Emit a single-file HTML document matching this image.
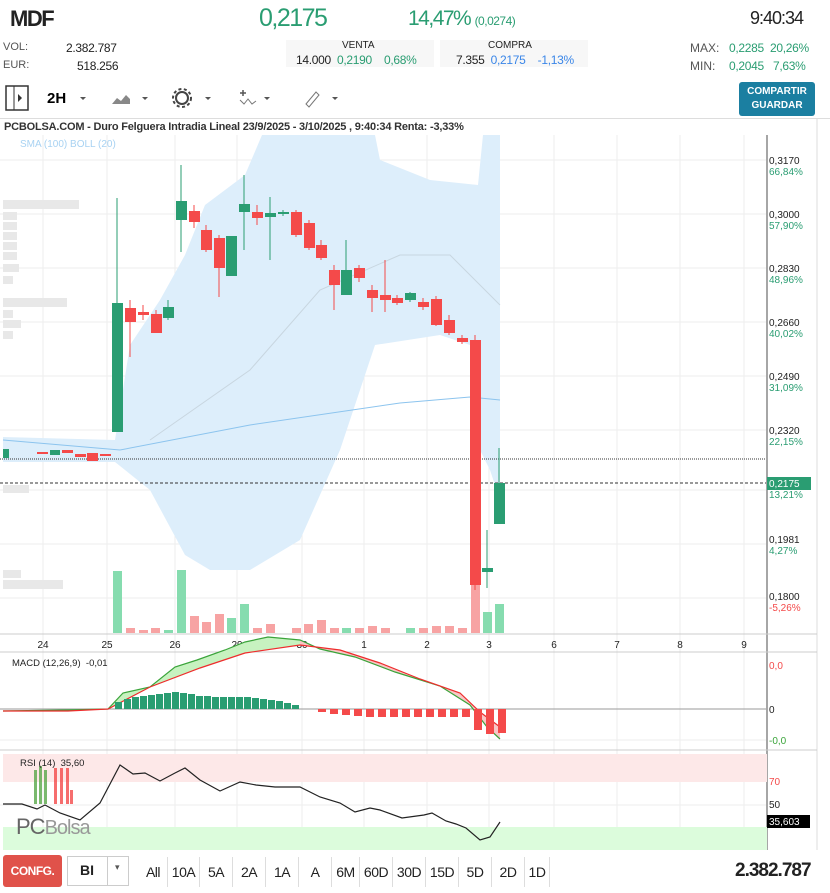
<!DOCTYPE html>
<html><head><meta charset="utf-8"><style>
body{margin:0;width:830px;height:893px;background:#fff;font-family:"Liberation Sans",sans-serif;position:relative;overflow:hidden;color:#222}
.a{position:absolute;white-space:nowrap}
.g{color:#2a9d72}.b{color:#3a86e8}
.s{font-size:11px;color:#555}
.bt{position:absolute;top:857px;height:30px;line-height:30px;font-size:14px;text-align:center;border-right:1px solid #ddd;letter-spacing:-0.5px}
</style></head><body>
<div class="a" style="left:10px;top:6px;font-size:22px;font-weight:bold;letter-spacing:-1.5px">MDF</div>
<div class="a g" style="left:259px;top:4px;font-size:25px;letter-spacing:-1.5px">0,2175</div>
<div class="a g" style="left:408px;top:7px;font-size:21px;letter-spacing:-1.5px">14,47% <span style="font-size:12px;letter-spacing:-0.5px">(0,0274)</span></div>
<div class="a" style="left:750px;top:8px;font-size:18px;letter-spacing:-1px">9:40:34</div>
<div class="a s" style="left:3px;top:41px">VOL:</div><div class="a s" style="left:3px;top:59px">EUR:</div>
<div class="a" style="left:66px;top:41px;font-size:12px;letter-spacing:-0.3px">2.382.787</div>
<div class="a" style="left:77px;top:59px;font-size:12px;letter-spacing:-0.3px">518.256</div>
<div class="a" style="left:286px;top:40px;width:148px;height:27px;background:#f7f7f7"></div>
<div class="a" style="left:440px;top:40px;width:148px;height:27px;background:#f7f7f7"></div>
<div class="a" style="left:342px;top:40px;font-size:10px">VENTA</div>
<div class="a" style="left:488px;top:40px;font-size:10px">COMPRA</div>
<div class="a" style="left:296px;top:53px;font-size:12px;letter-spacing:-0.3px">14.000 <span class="g">&nbsp;0,2190&nbsp;&nbsp;&nbsp; 0,68%</span></div>
<div class="a" style="left:456px;top:53px;font-size:12px;letter-spacing:-0.3px">7.355 <span class="b">&nbsp;0,2175&nbsp;&nbsp;&nbsp; -1,13%</span></div>
<div class="a s" style="left:690px;top:41px;font-size:12px">MAX:</div><div class="a s" style="left:690px;top:59px;font-size:12px">MIN:</div>
<div class="a g" style="left:729px;top:41px;font-size:12px;letter-spacing:-0.3px">0,2285 &nbsp;20,26%</div>
<div class="a g" style="left:729px;top:59px;font-size:12px;letter-spacing:-0.3px">0,2045 &nbsp;&nbsp;7,63%</div>
<!-- toolbar -->
<svg class="a" style="left:0;top:82px" width="360" height="32">
<rect x="6" y="4" width="22" height="24" fill="none" stroke="#333" stroke-width="1.5"/><line x1="14" y1="4" x2="14" y2="28" stroke="#333"/><path d="M18 12l4 4-4 4z" fill="#333"/>
<text x="47" y="21" font-size="15" font-weight="bold" font-family="Liberation Sans">2H</text>
<path d="M80 15h6l-3 3z M142 15h6l-3 3z M205 15h6l-3 3z M264 15h6l-3 3z M332 15h6l-3 3z" fill="#555"/>
<path d="M112 22l5-6 4 3 5-6 4 4v5z" fill="#888"/>
<circle cx="182" cy="16" r="6" fill="none" stroke="#444" stroke-width="2"/><circle cx="182" cy="16" r="9" fill="none" stroke="#444" stroke-width="2" stroke-dasharray="3 2.5"/>
<path d="M240 18l4 4 4-5 4 5 4-3" fill="none" stroke="#777"/><path d="M243 8v6M240 11h6" stroke="#555" stroke-width="1.5"/>
<path d="M306 22l10-12 3 3-10 12z" fill="none" stroke="#777"/>
</svg>
<div class="a" style="left:739px;top:82px;width:76px;height:34px;background:#1b7fa1;border-radius:3px;color:#fff;font-size:10px;font-weight:bold;text-align:center;line-height:14px;padding-top:3px;box-sizing:border-box">COMPARTIR<br>GUARDAR</div>
<div class="a" style="left:0;top:118px;width:830px;border-top:1px solid #ddd"></div>
<div class="a" style="left:4px;top:121px;font-size:11px;font-weight:bold;color:#333;letter-spacing:-0.2px">PCBOLSA.COM - Duro Felguera Intradia Lineal 23/9/2025 - 3/10/2025 , 9:40:34 Renta: -3,33%</div>
<svg class="a" style="left:0;top:0" width="830" height="893" font-family="Liberation Sans">
<g stroke="#eee" stroke-width="1">
<line x1="43" y1="135" x2="43" y2="850"/><line x1="107" y1="135" x2="107" y2="850"/><line x1="175" y1="135" x2="175" y2="850"/><line x1="237" y1="135" x2="237" y2="850"/><line x1="302" y1="135" x2="302" y2="850"/><line x1="364" y1="135" x2="364" y2="850"/><line x1="427" y1="135" x2="427" y2="850"/><line x1="489" y1="135" x2="489" y2="850"/><line x1="554" y1="135" x2="554" y2="850"/><line x1="617" y1="135" x2="617" y2="850"/><line x1="680" y1="135" x2="680" y2="850"/><line x1="744" y1="135" x2="744" y2="850"/>
<line x1="0" y1="160" x2="766" y2="160"/><line x1="0" y1="214" x2="766" y2="214"/><line x1="0" y1="268" x2="766" y2="268"/><line x1="0" y1="322" x2="766" y2="322"/><line x1="0" y1="376" x2="766" y2="376"/><line x1="0" y1="430" x2="766" y2="430"/><line x1="0" y1="490" x2="766" y2="490"/><line x1="0" y1="544" x2="766" y2="544"/><line x1="0" y1="598" x2="766" y2="598"/>
</g>
<!-- BB fill -->
<path d="M3 437 L115 440 L130 345 L160 300 L185 255 L205 205 L245 175 L262 135 L375 135 L380 160 L430 180 L478 185 L483 135 L500 135 L500 500 L490 470 L480 450 L470 345 L440 335 L375 345 L340 450 L300 540 L250 570 L210 570 L185 555 L150 490 L115 462 L3 462Z" fill="#ddeefb"/>
<path d="M150 440 L250 370 L320 290 L400 255 L450 255 L500 305" fill="none" stroke="#c8d6e0"/>
<path d="M3 440 L120 450 L250 425 L400 403 L470 397 L500 400" fill="none" stroke="#8cc4ee"/>
<text x="20" y="147" font-size="10" fill="#a8d2f2">SMA (100) BOLL (20)</text>
<!-- volume profile -->
<g fill="#e8e8e8"><rect x="3" y="200" width="76" height="9"/><rect x="3" y="212" width="14" height="8"/><rect x="3" y="222" width="14" height="8"/><rect x="3" y="232" width="14" height="8"/><rect x="3" y="242" width="14" height="8"/><rect x="3" y="252" width="14" height="8"/><rect x="3" y="264" width="16" height="8"/><rect x="3" y="276" width="10" height="8"/><rect x="3" y="298" width="64" height="9"/><rect x="3" y="310" width="10" height="8"/><rect x="3" y="320" width="18" height="8"/><rect x="3" y="331" width="10" height="8"/><rect x="3" y="485" width="26" height="8"/><rect x="3" y="570" width="18" height="8"/><rect x="3" y="580" width="60" height="9"/></g>
<line x1="0" y1="459" x2="766" y2="459" stroke="#333" stroke-dasharray="1 1"/>
<line x1="0" y1="483" x2="766" y2="483" stroke="#333" stroke-dasharray="3 2"/>
<!-- volume -->
<g fill="#86dcaf"><rect x="113" y="571" width="9" height="62"/><rect x="177" y="570" width="9" height="63"/><rect x="483" y="612" width="9" height="21"/><rect x="495" y="604" width="9" height="29"/><rect x="164" y="630" width="9" height="3"/><rect x="240" y="604" width="9" height="29"/><rect x="227" y="618" width="9" height="15"/><rect x="342" y="628" width="9" height="5"/><rect x="406" y="628" width="9" height="5"/></g>
<g fill="#f7a3a3"><rect x="471" y="585" width="9" height="48"/><rect x="126" y="628" width="9" height="5"/><rect x="139" y="630" width="9" height="3"/><rect x="151" y="628" width="9" height="5"/><rect x="190" y="616" width="9" height="17"/><rect x="202" y="622" width="9" height="11"/><rect x="215" y="614" width="9" height="19"/><rect x="253" y="628" width="9" height="5"/><rect x="266" y="624" width="9" height="9"/><rect x="292" y="628" width="9" height="5"/><rect x="304" y="624" width="9" height="9"/><rect x="317" y="620" width="9" height="13"/><rect x="330" y="628" width="9" height="5"/><rect x="355" y="628" width="9" height="5"/><rect x="368" y="626" width="9" height="7"/><rect x="381" y="628" width="9" height="5"/><rect x="419" y="628" width="9" height="5"/><rect x="432" y="626" width="9" height="7"/><rect x="445" y="626" width="9" height="7"/><rect x="458" y="628" width="9" height="5"/></g>
<!-- wicks -->
<g stroke-width="1">
<path stroke="#2a9d72" d="M117 198V432 M168 300V320 M181 165V252 M231 236V276 M244 175V250 M270 197V260 M283 210V216 M346 240V295 M410 292V302 M487 530V588 M499 448V524"/>
<path stroke="#f44a4a" d="M130 300V357 M143 305V320 M156 310V333 M194 205V228 M206 225V252 M219 235V297 M257 205V225 M296 210V237 M309 220V250 M321 240V260 M334 265V310 M359 265V282 M372 285V312 M385 260V312 M397 295V305 M423 298V310 M436 296V326 M449 315V335 M462 335V344 M475 335V590"/>
</g>
<g fill="#2a9d72"><rect x="3" y="449" width="6" height="9"/><rect x="50" y="450" width="10" height="5"/><rect x="112" y="303" width="11" height="129"/><rect x="163" y="307" width="11" height="11"/><rect x="176" y="201" width="11" height="19"/><rect x="226" y="236" width="11" height="40"/><rect x="239" y="204" width="11" height="8"/><rect x="265" y="213" width="11" height="4"/><rect x="278" y="212" width="11" height="2"/><rect x="341" y="270" width="11" height="25"/><rect x="405" y="293" width="11" height="7"/><rect x="482" y="568" width="11" height="4"/><rect x="494" y="483" width="11" height="41"/></g>
<g fill="#f44a4a"><rect x="37" y="452" width="11" height="2"/><rect x="62" y="450" width="11" height="3"/><rect x="75" y="454" width="11" height="3"/><rect x="87" y="453" width="11" height="8"/><rect x="100" y="454" width="11" height="2"/><rect x="125" y="308" width="11" height="14"/><rect x="138" y="312" width="11" height="3"/><rect x="151" y="314" width="11" height="19"/><rect x="189" y="211" width="11" height="11"/><rect x="201" y="230" width="11" height="20"/><rect x="214" y="238" width="11" height="30"/><rect x="252" y="212" width="11" height="6"/><rect x="291" y="212" width="11" height="23"/><rect x="304" y="223" width="11" height="25"/><rect x="316" y="245" width="11" height="13"/><rect x="329" y="270" width="11" height="15"/><rect x="354" y="268" width="11" height="10"/><rect x="367" y="290" width="11" height="8"/><rect x="380" y="295" width="11" height="5"/><rect x="392" y="298" width="11" height="5"/><rect x="418" y="302" width="11" height="5"/><rect x="431" y="299" width="11" height="26"/><rect x="444" y="320" width="11" height="13"/><rect x="457" y="338" width="11" height="4"/><rect x="470" y="340" width="11" height="245"/></g>
<!-- axis -->
<line x1="767" y1="135" x2="767" y2="850" stroke="#888" stroke-width="1.5"/>
<line x1="817" y1="118" x2="817" y2="850" stroke="#ddd"/>
<line x1="0" y1="634" x2="817" y2="634" stroke="#ccc"/>
<line x1="0" y1="652" x2="817" y2="652" stroke="#ccc"/>
<line x1="0" y1="750" x2="817" y2="750" stroke="#ccc"/>
<g font-size="10"><text x="769" y="164" fill="#222">0,3170</text><text x="769" y="175" fill="#2a9d72">66,84%</text>
<text x="769" y="218" fill="#222">0,3000</text><text x="769" y="229" fill="#2a9d72">57,90%</text>
<text x="769" y="272" fill="#222">0,2830</text><text x="769" y="283" fill="#2a9d72">48,96%</text>
<text x="769" y="326" fill="#222">0,2660</text><text x="769" y="337" fill="#2a9d72">40,02%</text>
<text x="769" y="380" fill="#222">0,2490</text><text x="769" y="391" fill="#2a9d72">31,09%</text>
<text x="769" y="434" fill="#222">0,2320</text><text x="769" y="445" fill="#2a9d72">22,15%</text>
<rect x="767" y="477" width="44" height="13" fill="#2a9d72"/><text x="769" y="487" fill="#fff">0,2175</text><text x="769" y="498" fill="#2a9d72">13,21%</text>
<text x="769" y="543" fill="#222">0,1981</text><text x="769" y="554" fill="#2a9d72">4,27%</text>
<text x="769" y="600" fill="#222">0,1800</text><text x="769" y="611" fill="#f44a4a">-5,26%</text></g>
<g font-size="10" fill="#222" text-anchor="middle"><text x="43" y="648">24</text><text x="107" y="648">25</text><text x="175" y="648">26</text><text x="237" y="648">29</text><text x="302" y="648">30</text><text x="364" y="648">1</text><text x="427" y="648">2</text><text x="489" y="648">3</text><text x="554" y="648">6</text><text x="617" y="648">7</text><text x="680" y="648">8</text><text x="744" y="648">9</text></g>
<!-- MACD -->
<line x1="0" y1="709" x2="766" y2="709" stroke="#999"/>
<line x1="0" y1="740" x2="766" y2="740" stroke="#eee"/>
<path d="M108 709L123 693L150 687L175 667L197 660L225 650L245 642L268 637L300 640L300 645L245 653L200 668L150 687L108 709Z" fill="#c7f2c0"/>
<path d="M300 640L320 649L355 657L395 672L440 686L470 705L487 727L500 739L500 727L480 712L460 693L420 679L380 663L340 650L300 645Z" fill="#f9c6c6"/>
<path d="M3 711L68 710L108 709L123 693L150 687L175 667L197 660L225 650L245 642L268 637L300 640L320 649L355 657L395 672L440 686L470 705L487 727L500 739" fill="none" stroke="#3aa43a" stroke-width="1.2"/>
<path d="M3 711L68 711L108 709L150 687L200 668L245 653L300 645L340 650L380 663L420 679L460 693L480 712L500 727" fill="none" stroke="#ee2c2c" stroke-width="1.2"/>
<g fill="#2a9d72"><rect x="115" y="702" width="7" height="7"/><rect x="124" y="699" width="7" height="10"/><rect x="132" y="697" width="7" height="12"/><rect x="140" y="696" width="7" height="13"/><rect x="148" y="695" width="7" height="14"/><rect x="156" y="694" width="7" height="15"/><rect x="164" y="693" width="7" height="16"/><rect x="172" y="692" width="7" height="17"/><rect x="180" y="693" width="7" height="16"/><rect x="188" y="694" width="7" height="15"/><rect x="196" y="696" width="7" height="13"/><rect x="204" y="696" width="7" height="13"/><rect x="212" y="697" width="7" height="12"/><rect x="220" y="697" width="7" height="12"/><rect x="228" y="697" width="7" height="12"/><rect x="236" y="697" width="7" height="12"/><rect x="244" y="697" width="7" height="12"/><rect x="252" y="698" width="7" height="11"/><rect x="260" y="699" width="7" height="10"/><rect x="268" y="700" width="7" height="9"/><rect x="276" y="701" width="7" height="8"/><rect x="284" y="703" width="7" height="6"/><rect x="292" y="705" width="7" height="4"/></g>
<g fill="#f44a4a"><rect x="318" y="709" width="8" height="3"/><rect x="330" y="709" width="8" height="5"/><rect x="342" y="709" width="8" height="6"/><rect x="354" y="709" width="8" height="7"/><rect x="366" y="709" width="8" height="8"/><rect x="378" y="709" width="8" height="8"/><rect x="390" y="709" width="8" height="8"/><rect x="402" y="709" width="8" height="8"/><rect x="414" y="709" width="8" height="8"/><rect x="426" y="709" width="8" height="8"/><rect x="438" y="709" width="8" height="8"/><rect x="450" y="709" width="8" height="8"/><rect x="462" y="709" width="8" height="8"/><rect x="474" y="709" width="8" height="21"/><rect x="486" y="709" width="8" height="25"/><rect x="498" y="709" width="8" height="24"/></g>
<text x="12" y="666" font-size="9.5" fill="#222">MACD (12,26,9)&#160;&#160;-0,01</text>
<text x="769" y="669" font-size="10" fill="#f44a4a">0,0</text><text x="769" y="713" font-size="10" fill="#222">0</text><text x="769" y="744" font-size="10" fill="#3aa43a">-0,0</text>
<!-- RSI -->
<rect x="3" y="754" width="764" height="28" fill="#fde8e8"/>
<rect x="3" y="827" width="764" height="23" fill="#dcfcdc"/>
<line x1="0" y1="805" x2="766" y2="805" stroke="#eee"/>
<g fill="#5aa84a" opacity=".8"><rect x="34" y="770" width="3" height="34"/><rect x="39" y="766" width="3" height="38"/><rect x="44" y="770" width="3" height="34"/></g>
<g fill="#f44a4a" opacity=".8"><rect x="54" y="768" width="3" height="36"/><rect x="60" y="768" width="3" height="36"/><rect x="66" y="768" width="3" height="36"/><rect x="70" y="790" width="3" height="14"/></g>
<path d="M3 804L22 804L37 809L45 805L60 813L80 820L100 803L120 765L133 774L145 773L160 781L175 773L185 768L200 780L220 791L240 782L256 785L275 787L300 787L320 797L340 803L355 812L370 808L380 810L402 818L424 815L432 813L446 821L456 824L466 828L480 840L490 837L500 822" fill="none" stroke="#222" stroke-width="1.2"/>
<text x="20" y="766" font-size="9.5" fill="#222">RSI (14)&#160;&#160;35,60</text>
<text x="16" y="834" font-size="22" fill="#666" letter-spacing="-1">PC<tspan font-size="20" fill="#999">Bolsa</tspan></text>
<text x="769" y="785" font-size="10" fill="#f44a4a">70</text><text x="769" y="808" font-size="10" fill="#222">50</text>
<rect x="767" y="815" width="43" height="13" fill="#000"/><text x="769" y="825" font-size="10" fill="#fff">35,603</text>
</svg>
<!-- bottom bar -->
<div class="a" style="left:3px;top:855px;width:59px;height:32px;background:#e0524a;border-radius:3px;color:#fff;font-size:12px;font-weight:bold;line-height:32px;text-align:center;letter-spacing:-0.5px">CONFG.</div>
<div class="a" style="left:67px;top:856px;width:62px;height:30px;border:1px solid #ccc;box-sizing:border-box"></div>
<div class="a" style="left:107px;top:856px;height:30px;border-left:1px solid #ccc"></div>
<div class="a" style="left:80px;top:862px;font-size:14px;font-weight:bold">BI</div>
<div class="a" style="left:115px;top:862px;font-size:9px;color:#555">▾</div>
<div class="bt" style="left:139px;width:28px">All</div><div class="bt" style="left:168px;width:31px">10A</div><div class="bt" style="left:200px;width:32px">5A</div><div class="bt" style="left:233px;width:32px">2A</div><div class="bt" style="left:266px;width:32px">1A</div><div class="bt" style="left:299px;width:32px">A</div><div class="bt" style="left:332px;width:27px">6M</div><div class="bt" style="left:360px;width:32px">60D</div><div class="bt" style="left:393px;width:32px">30D</div><div class="bt" style="left:426px;width:32px">15D</div><div class="bt" style="left:459px;width:32px">5D</div><div class="bt" style="left:492px;width:32px">2D</div><div class="bt" style="left:525px;width:24px">1D</div>
<div class="a" style="left:735px;top:860px;font-size:19px;font-weight:bold;letter-spacing:-1px">2.382.787</div>
</body></html>
